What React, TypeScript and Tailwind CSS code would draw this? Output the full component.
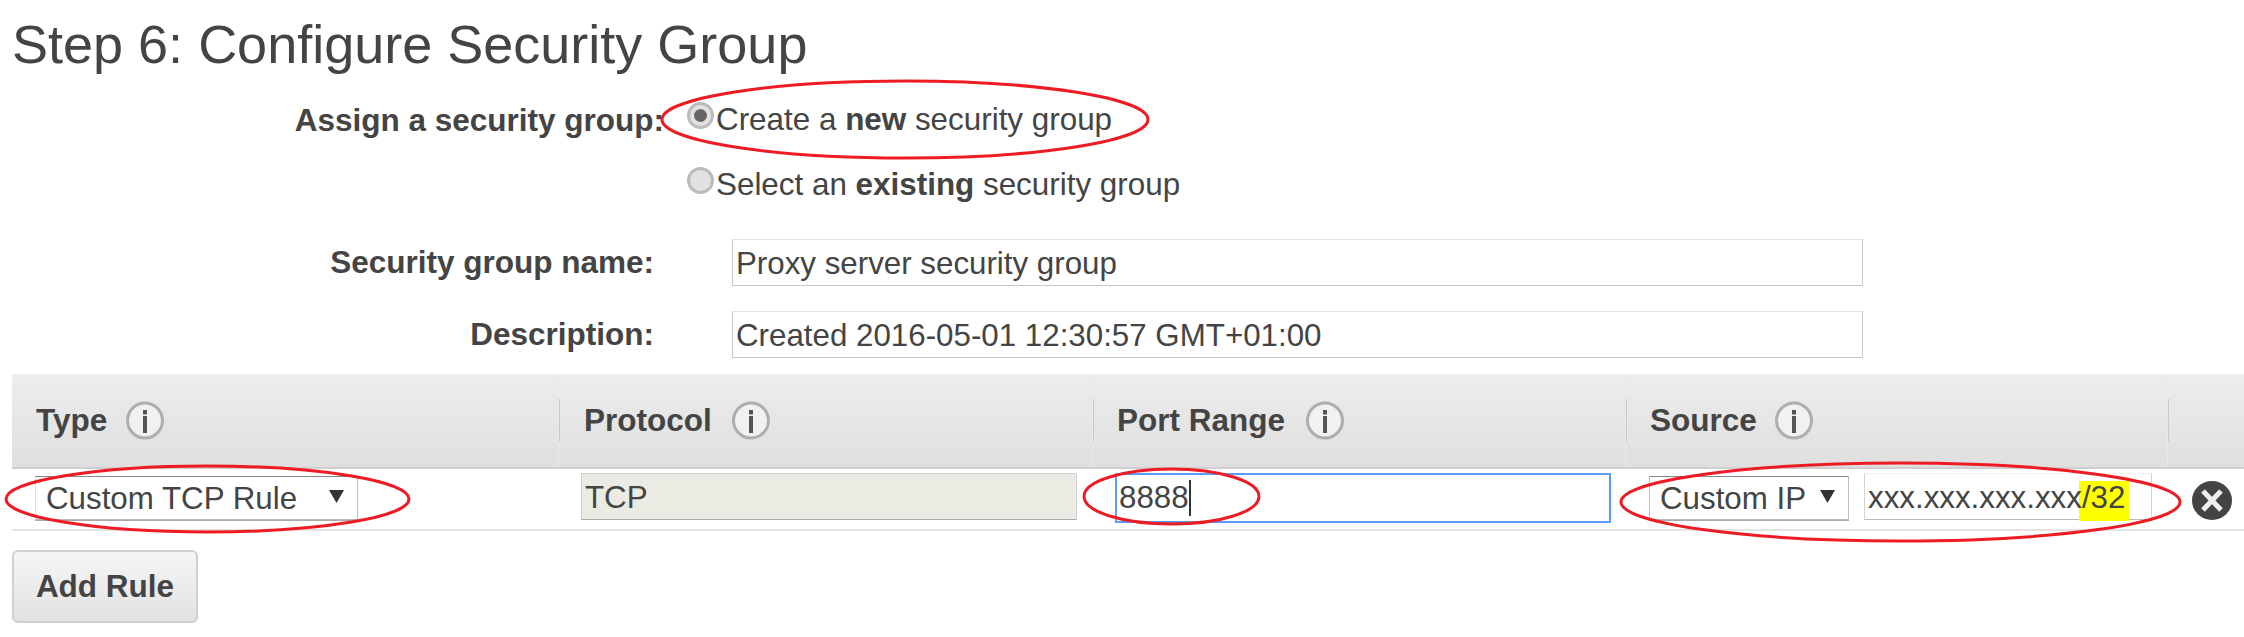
const font = "font-['Liberation_Sans',Arial,sans-serif]";

function InfoIcon() {
  return (
    <svg width="38" height="39" viewBox="0 0 38 39" className="shrink-0">
      <circle cx="19" cy="19.5" r="17.5" fill="#f1f1f1" stroke="#aeaeae" strokeWidth="3" />
      <rect x="17" y="9" width="4" height="4.5" fill="#555" />
      <rect x="17" y="15" width="4" height="17" fill="#555" />
    </svg>
  );
}

function HeaderCell({ label, pad, gap, line = true }: { label?: string; pad: string; gap: string; line?: boolean }) {
  return (
    <div className="flex h-full items-center border-l border-[#e9e9e9] first:border-l-0">
      {line && <div className="h-[43px] w-px shrink-0 bg-[#c9c9c9]" />}
      {label && (
        <div className={`flex items-center ${pad} ${gap}`}>
          <span className="text-[31.5px] font-bold text-[#444]">{label}</span>
          <InfoIcon />
        </div>
      )}
    </div>
  );
}

function Arrow() {
  return (
    <svg width="15" height="13" viewBox="0 0 15 13" className="mb-[6px]">
      <path d="M0 0H15L7.5 13Z" fill="#333" />
    </svg>
  );
}

function Radio({ checked }: { checked?: boolean }) {
  return (
    <div className="flex h-[27px] w-[27px] shrink-0 items-center justify-center rounded-full border-[3px] border-[#bbb] bg-[#e2e2e2]">
      {checked && <div className="h-[13px] w-[13px] rounded-full bg-[#666]" />}
    </div>
  );
}

function Ellipse({ x, y, w, h }: { x: number; y: number; w: number; h: number }) {
  return (
    <ellipse cx={x + w / 2} cy={y + h / 2} rx={w / 2} ry={h / 2} fill="none" stroke="#ed1c24" strokeWidth="3" />
  );
}

export default function App() {
  return (
    <div className={`relative h-[637px] w-[2244px] overflow-hidden bg-white text-[#444] ${font}`}>
      <h1 className="pl-[12px] pt-[14px] text-[54px] leading-[60px] font-normal text-[#444]">
        Step 6: Configure Security Group
      </h1>

      {/* assign a security group */}
      <div className="mt-[28px] flex">
        <div className="w-[664px] text-right text-[31.5px] leading-[36px] font-bold">Assign a security group:</div>
        <div className="ml-[23px] flex flex-col gap-[29px]">
          <div className="flex items-start gap-[2px] text-[31.4px] leading-[36px]">
            <Radio checked />
            <span>
              Create a <b>new</b> security group
            </span>
          </div>
          <div className="flex items-start gap-[2px] text-[31.4px] leading-[36px]">
            <Radio />
            <span>
              Select an <b>existing</b> security group
            </span>
          </div>
        </div>
      </div>

      {/* name + description */}
      <div className="mt-[36px] flex flex-col gap-[25px]">
        <div className="flex">
          <div className="w-[654px] pt-[5px] text-right text-[31.5px] leading-[36px] font-bold">Security group name:</div>
          <div className="ml-[78px] flex h-[47px] w-[1131px] items-center border border-[#c8c8c8] border-t-[#e2e2e2] pl-[3px] pt-[4px] text-[31.3px]">
            Proxy server security group
          </div>
        </div>
        <div className="flex">
          <div className="w-[654px] pt-[5px] text-right text-[31.5px] leading-[36px] font-bold">Description:</div>
          <div className="ml-[78px] flex h-[47px] w-[1131px] items-center border border-[#c8c8c8] border-t-[#e2e2e2] pl-[3px] pt-[4px] text-[31.3px]">
            Created 2016-05-01 12:30:57 GMT+01:00
          </div>
        </div>
      </div>

      {/* rules table */}
      <div className="ml-[12px] mt-[16px] w-[2232px]">
        <div className="grid h-[95px] grid-cols-[546px_534px_533px_542px_77px] border-b-2 border-[#cfcfcf] bg-gradient-to-b from-[#ededed] to-[#dfdfdf]">
          <HeaderCell label="Type" pad="pl-[24px]" gap="gap-[19px]" line={false} />
          <HeaderCell label="Protocol" pad="pl-[24px]" gap="gap-[20px]" />
          <HeaderCell label="Port Range" pad="pl-[23px]" gap="gap-[21px]" />
          <HeaderCell label="Source" pad="pl-[23px]" gap="gap-[18px]" />
          <HeaderCell pad="" gap="" />
        </div>
        <div className="grid h-[62px] grid-cols-[546px_534px_533px_542px_77px] border-b-2 border-[#e4e4e4] text-[31.3px]">
          <div className="pl-[23px] pt-[7px]">
            <div className="flex h-[44px] w-[323px] items-center justify-between border border-[#bbb] border-t-[#888] border-l-[#ddd] pl-[10px] pr-[13px] pt-[2px] shadow-[0_1px_0_#aaa]">
              <span>Custom TCP Rule</span>
              <Arrow />
            </div>
          </div>
          <div className="pl-[23px] pt-[4px]">
            <div className="flex h-[47px] w-[496px] items-center border border-[#d0d0d0] border-b-[#aaa] bg-[#ebebe4] pl-[3px] pt-[3px]">TCP</div>
          </div>
          <div className="pl-[23px] pt-[4px]">
            <div className="flex h-[50px] w-[496px] items-center border-2 border-[#5b9dff] pl-[2px]">
              <span className="pt-[1px]">8888</span>
              <span className="h-[36px] w-[2px] bg-[#333]" />
            </div>
          </div>
          <div className="flex items-start pl-[24px] pt-[4px]">
            <div className="mt-[3px] flex h-[44px] w-[200px] items-center justify-between border border-[#bbb] border-t-[#888] pl-[10px] pr-[13px] pt-[2px] shadow-[0_1px_0_#aaa]">
              <span>Custom IP</span>
              <Arrow />
            </div>
            <div className="ml-[15px] flex h-[47px] w-[288px] items-start border border-[#d5d5d5] border-t-[#f4f4f4] border-b-[#bbb] pl-[3px] pt-[7px] leading-[34px]">
              <span className="relative z-10">xxx.xxx.xxx.xxx</span>
              <span className="-ml-[3px] bg-[#ffff00] pb-[6px] pl-[3px] pr-[4px]">/32</span>
            </div>
          </div>
          <div className="pl-[25px] pt-[12px]">
            <svg width="40" height="39" viewBox="0 0 40 39">
              <ellipse cx="20" cy="19.5" rx="20" ry="19.5" fill="#444" />
              <path d="M11 10L29 29M29 10L11 29" stroke="#eee" strokeWidth="5" />
            </svg>
          </div>
        </div>
        <button className="mt-[19px] flex h-[73px] w-[186px] items-center justify-center rounded-[6px] border-2 border-[#d0d0d0] bg-gradient-to-b from-[#f6f6f6] to-[#e2e2e2] text-[31.5px] font-bold text-[#444]">
          Add Rule
        </button>
      </div>

      {/* red annotations */}
      <svg width="2244" height="637" className="pointer-events-none absolute left-0 top-0 z-20">
        <Ellipse x={662} y={81} w={486} h={77} />
        <Ellipse x={6} y={466} w={403} h={66} />
        <Ellipse x={1084} y={469} w={175} h={55} />
        <Ellipse x={1621} y={463} w={559} h={78} />
      </svg>
    </div>
  );
}
